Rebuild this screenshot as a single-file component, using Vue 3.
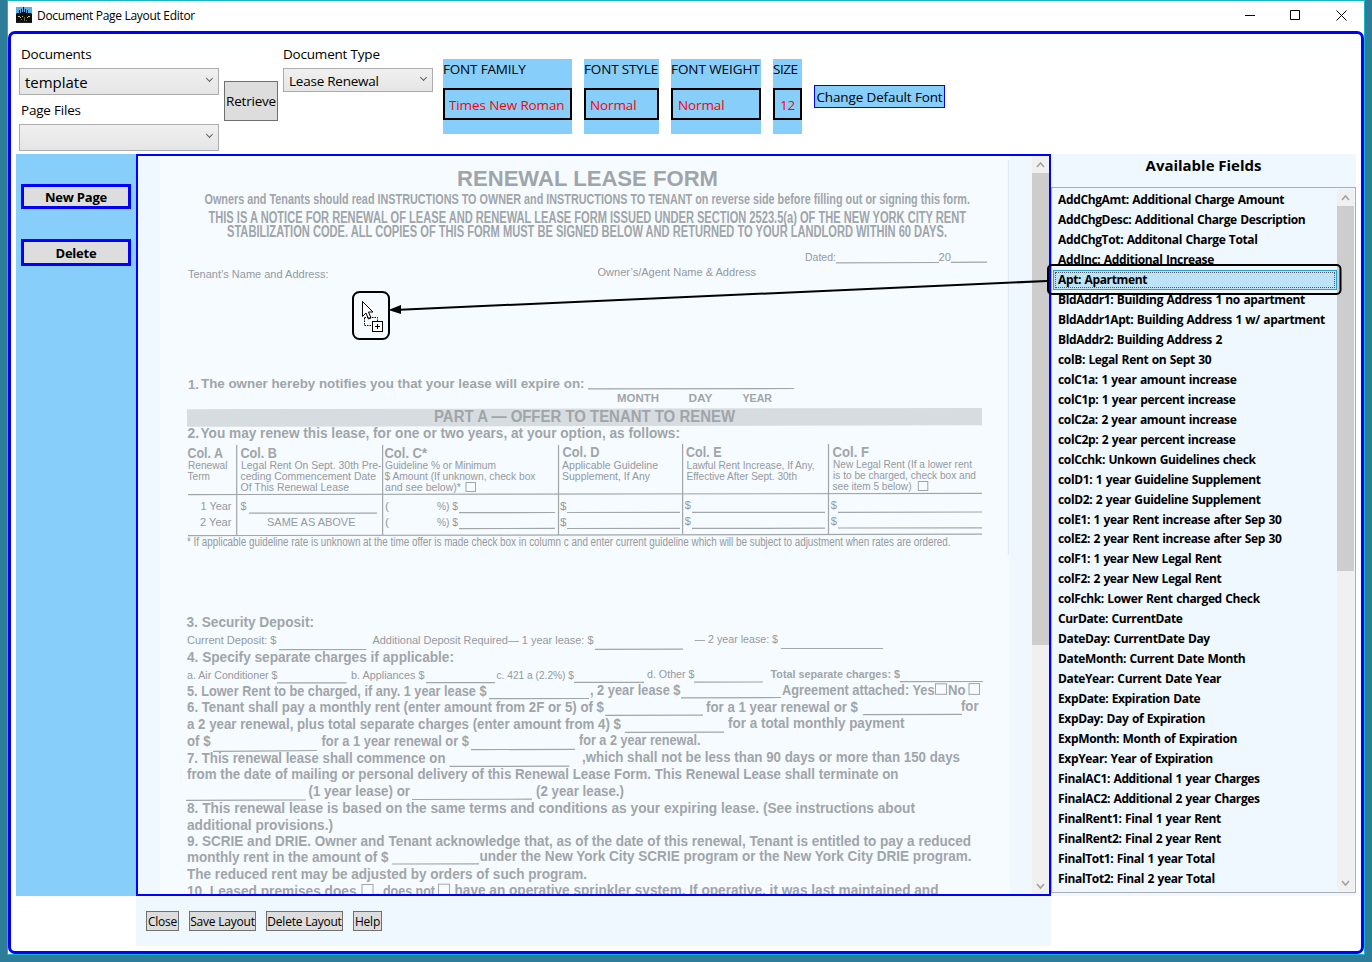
<script setup>
const fields = [
  'AddChgAmt: Additional Charge Amount',
  'AddChgDesc: Additional Charge Description',
  'AddChgTot: Additonal Charge Total',
  'AddInc: Additional Increase',
  'Apt: Apartment',
  'BldAddr1: Building Address 1 no apartment',
  'BldAddr1Apt: Building Address 1 w/ apartment',
  'BldAddr2: Building Address 2',
  'colB: Legal Rent on Sept 30',
  'colC1a: 1 year amount increase',
  'colC1p: 1 year percent increase',
  'colC2a: 2 year amount increase',
  'colC2p: 2 year percent increase',
  'colCchk: Unkown Guidelines check',
  'colD1: 1 year Guideline Supplement',
  'colD2: 2 year Guideline Supplement',
  'colE1: 1 year Rent increase after Sep 30',
  'colE2: 2 year Rent increase after Sep 30',
  'colF1: 1 year New Legal Rent',
  'colF2: 2 year New Legal Rent',
  'colFchk: Lower Rent charged Check',
  'CurDate: CurrentDate',
  'DateDay: CurrentDate Day',
  'DateMonth: Current Date Month',
  'DateYear: Current Date Year',
  'ExpDate: Expiration Date',
  'ExpDay: Day of Expiration',
  'ExpMonth: Month of Expiration',
  'ExpYear: Year of Expiration',
  'FinalAC1: Additional 1 year Charges',
  'FinalAC2: Additional 2 year Charges',
  'FinalRent1: Final 1 year Rent',
  'FinalRent2: Final 2 year Rent',
  'FinalTot1: Final 1 year Total',
  'FinalTot2: Final 2 year Total',
]
const selected = 4

const fontPanels = [
  { label: 'FONT FAMILY', value: 'Times New Roman', cls: 'family' },
  { label: 'FONT STYLE', value: 'Normal', cls: 'style' },
  { label: 'FONT WEIGHT', value: 'Normal', cls: 'weight' },
  { label: 'SIZE', value: '12', cls: 'size' },
]

// Printed text of the lease form: [left, baseline, right, font size, text]
const bold = [
  [457, 186.2, 718, 22, 'RENEWAL LEASE FORM'],
  [204.5, 203.6, 970, 14.4, 'Owners and Tenants should read INSTRUCTIONS TO OWNER and INSTRUCTIONS TO TENANT on reverse side before filling out or signing this form.'],
  [208.5, 223.1, 966, 16, 'THIS IS A NOTICE FOR RENEWAL OF LEASE AND RENEWAL LEASE FORM ISSUED UNDER SECTION 2523.5(a) OF THE NEW YORK CITY RENT'],
  [227, 236.9, 947, 16, 'STABILIZATION CODE. ALL COPIES OF THIS FORM MUST BE SIGNED BELOW AND RETURNED TO YOUR LANDLORD WITHIN 60 DAYS.'],
  [188, 388.6, 199, 13.7, '1.'],
  [201, 388.4, 584.5, 13.7, 'The owner hereby notifies you that your lease will expire on:'],
  [617, 402, 659, 11, 'MONTH'],
  [688.5, 402, 712.5, 11, 'DAY'],
  [742.5, 401.6, 772, 11, 'YEAR'],
  [434, 422, 735, 16, 'PART A — OFFER TO TENANT TO RENEW'],
  [187.5, 438.4, 199, 13.8, '2.'],
  [200.5, 438.2, 680, 13.8, 'You may renew this lease, for one or two years, at your option, as follows:'],
  [187.5, 457.7, 223, 13.8, 'Col. A'],
  [240.5, 457.7, 277, 13.8, 'Col. B'],
  [384.5, 457.5, 427, 13.8, 'Col. C*'],
  [562.5, 457.2, 599.5, 13.8, 'Col. D'],
  [686, 457, 721.5, 13.8, 'Col. E'],
  [832.5, 456.8, 869, 13.8, 'Col. F'],
  [186.5, 627.4, 314, 13.8, '3. Security Deposit:'],
  [187, 662.4, 454, 13.8, '4. Specify separate charges if applicable:'],
  [770.5, 678, 900, 11.6, 'Total separate charges: $'],
  [187, 696, 486.5, 13.8, '5. Lower Rent to be charged, if any. 1 year lease $'],
  [590, 695.3, 680.5, 13.8, ', 2 year lease $'],
  [782, 694.7, 934.5, 13.8, 'Agreement attached: Yes'],
  [948, 694.5, 965.5, 13.8, 'No'],
  [187, 712.4, 604, 13.8, '6. Tenant shall pay a monthly rent (enter amount from 2F or 5) of $'],
  [706, 711.6, 858, 13.8, 'for a 1 year renewal or $'],
  [961, 711.3, 978.5, 13.8, 'for'],
  [187, 729.3, 621, 13.8, 'a 2 year renewal, plus total separate charges (enter amount from 4) $'],
  [728, 728, 904.5, 13.8, 'for a total monthly payment'],
  [187, 746, 210.5, 13.8, 'of $'],
  [321.5, 745.6, 469, 13.8, 'for a 1 year renewal or $'],
  [579, 745, 700.5, 13.8, 'for a 2 year renewal.'],
  [187, 763, 445.5, 13.8, '7. This renewal lease shall commence on'],
  [582, 762, 960, 13.8, ',which shall not be less than 90 days or more than 150 days'],
  [187, 779.4, 898.5, 13.8, 'from the date of mailing or personal delivery of this Renewal Lease Form. This Renewal Lease shall terminate on'],
  [308.5, 796, 410, 13.8, '(1 year lease) or'],
  [536, 795.5, 624, 13.8, '(2 year lease.)'],
  [187, 812.6, 915, 13.8, '8. This renewal lease is based on the same terms and conditions as your expiring lease. (See instructions about'],
  [187, 830, 333, 13.8, 'additional provisions.)'],
  [187, 845.5, 971, 13.8, '9. SCRIE and DRIE. Owner and Tenant acknowledge that, as of the date of this renewal, Tenant is entitled to pay a reduced'],
  [187, 862.4, 388.5, 13.8, 'monthly rent in the amount of $'],
  [479.5, 861.4, 971.5, 13.8, 'under the New York City SCRIE program or the New York City DRIE program.'],
  [187, 879.2, 587, 13.8, 'The reduced rent may be adjusted by orders of such program.'],
  [187, 896, 356.5, 13.8, '10. Leased premises does'],
  [376, 895.6, 435, 13.8, ', does not'],
  [454.5, 895.2, 938.5, 13.8, 'have an operative sprinkler system. If operative, it was last maintained and'],
]
const regular = [
  [188, 277.6, 328.5, 11.6, 'Tenant’s Name and Address:'],
  [597.5, 276.3, 756, 11.6, 'Owner’s/Agent Name & Address'],
  [805, 261.2, 836, 11.6, 'Dated:'],
  [938.5, 260.8, 951, 11.6, '20'],
  [188, 469.4, 227.5, 11.2, 'Renewal'],
  [187.5, 480.2, 210, 11.2, 'Term'],
  [241, 469.4, 381.5, 11.2, 'Legal Rent On Sept. 30th Pre-'],
  [240.5, 480.2, 376, 11.2, 'ceding Commencement Date'],
  [240.5, 491.2, 349, 11.2, 'Of This Renewal Lease'],
  [385, 469.3, 496, 11.2, 'Guideline % or Minimum'],
  [384.5, 480, 535.5, 11.2, '$ Amount (If unknown, check box'],
  [385, 491, 461, 11.2, 'and see below)*'],
  [562, 468.8, 658, 11.2, 'Applicable Guideline'],
  [562, 479.8, 650, 11.2, 'Supplement, If Any'],
  [686.5, 468.5, 814.5, 11.2, 'Lawful Rent Increase, If Any,'],
  [686.5, 479.5, 797, 11.2, 'Effective After Sept. 30th'],
  [833, 468.2, 972, 11.2, 'New Legal Rent (If a lower rent'],
  [833, 479.2, 976, 11.2, 'is to be charged, check box and'],
  [832.5, 490.4, 911.5, 11.2, 'see item 5 below)'],
  [200.5, 510.3, 231.5, 11.4, '1 Year'],
  [200, 526.4, 231.5, 11.4, '2 Year'],
  [240.5, 510, 246.5, 11.4, '$'],
  [267, 526, 355.5, 11.4, 'SAME AS ABOVE'],
  [385, 510, 389, 11.4, '('],
  [385, 526.2, 389, 11.4, '('],
  [437, 509.8, 458, 11.4, '%) $'],
  [437, 526, 458, 11.4, '%) $'],
  [560, 509.6, 566.5, 11.4, '$'],
  [560, 525.6, 566.5, 11.4, '$'],
  [684.8, 509.2, 691, 11.4, '$'],
  [684.8, 525.4, 691, 11.4, '$'],
  [830.8, 509, 837, 11.4, '$'],
  [830.8, 525.2, 837, 11.4, '$'],
  [187, 545.8, 950.5, 12, '* If applicable guideline rate is unknown at the time offer is made check box in column c and enter current guideline which will be subject to adjustment when rates are ordered.'],
  [187, 644.4, 276.5, 11.6, 'Current Deposit: $'],
  [372.5, 644, 593.5, 11.6, 'Additional Deposit Required— 1 year lease: $'],
  [694.5, 643.4, 778, 11.6, '— 2 year lease: $'],
  [187, 679.4, 277.5, 11.6, 'a. Air Conditioner $'],
  [351, 679.2, 424.5, 11.6, 'b. Appliances $'],
  [496.5, 678.8, 574, 11.6, 'c. 421 a (2.2%) $'],
  [647, 678.4, 694.5, 11.6, 'd. Other $'],
]
// Fill-in rules and table rules: [x1, y1, x2, y2]
const rules = [
  [836, 262.8, 939, 262.5], [951, 262.4, 987, 262.2], [588, 388.8, 794, 388.5],
  [188, 494.6, 982, 493.4], [188, 535.6, 982, 534.2],
  [236.7, 445, 236.7, 535], [382.6, 445, 382.6, 535], [558.5, 445, 558.5, 535],
  [682.6, 444, 682.6, 534], [828.5, 444, 828.5, 534],
  [249, 513.2, 377, 513.2], [459, 512.7, 555, 512.5], [459, 528.6, 555, 528.4],
  [567, 512.5, 680, 512.4], [567, 528.5, 680, 528.4], [692, 512.4, 825, 512.3],
  [692, 528.4, 825, 528.2], [838, 512.3, 982, 512], [838, 528, 982, 527.8],
  [279, 649.6, 366, 649.5], [595, 649.3, 683, 649.2], [781, 648.5, 883, 648.5],
  [277, 682.8, 346.5, 682.8], [426, 682.6, 495, 682.6], [574, 682.3, 644, 682.3],
  [694, 682.2, 763, 682], [900, 681.7, 983, 681.5], [489, 698.6, 589, 698.5],
  [681, 697.8, 781, 697.5], [605, 715.4, 703, 715.2], [863, 714.6, 962, 714.4],
  [625, 732.4, 724, 732.2], [213, 751.4, 317, 750.5], [471, 749.6, 575, 749.4],
  [449.5, 766.4, 569.5, 766.2], [186, 800.4, 306, 800], [412, 799.5, 532, 799.2],
  [392, 864, 479, 863.8],
]
const boxes = [
  [466, 482.5, 9.5, 9], [918.3, 481.5, 9.5, 9], [935.5, 683.8, 11, 10.5],
  [969, 683.6, 10.5, 10.8], [362, 884.5, 11, 12], [438.5, 884.2, 11, 12],
]
</script>

<template>
  <div class="desktop">
    <div class="window">
      <header class="titlebar">
        <svg class="app-icon" width="16" height="16" viewBox="0 0 16 16">
          <rect width="16" height="16" fill="#5aaee6" />
          <path d="M0 15V7l1-1h2V3h1v3h1V2h1v3h1V0h1v5h1V2h1v4h1V3h1v3h3l1 1v8z" fill="#0b0d10" />
          <path d="M2 9h2v1H2zM4 10h1v1H4zM12 9h2v1h-2zM11 10h1v1h-1zM6 9h1v1H6z" fill="#d8d26a" />
          <path d="M8 10h1v4H8zM5 12h1v1H5zM10 13h1v1h-1z" fill="#6f6b33" />
          <rect y="15" width="16" height="1" fill="#182430" />
        </svg>
        <span class="title">Document Page Layout Editor</span>
        <svg class="controls" width="110" height="20" viewBox="0 0 110 20">
          <path d="M0 10.500h10M45.500 5.500h9v9h-9zM91.500 5.500l10 10M101.500 5.500l-10 10" fill="none" stroke="#000" />
        </svg>
      </header>

      <div class="frame">
        <section class="toolbar">
          <div class="docs">
            <label>Documents</label>
            <div class="combo big"><span>template</span><i class="chev"></i></div>
            <label>Page Files</label>
            <div class="combo big"><span></span><i class="chev"></i></div>
          </div>
          <button class="btn retrieve">Retrieve</button>
          <div class="type">
            <label>Document Type</label>
            <div class="combo"><span>Lease Renewal</span><i class="chev"></i></div>
          </div>
          <div class="fonts">
            <div v-for="p in fontPanels" :key="p.label" class="font-panel" :class="p.cls">
              <div class="font-label">{{ p.label }}</div>
              <div class="font-value">{{ p.value }}</div>
            </div>
          </div>
          <button class="change">Change Default Font</button>
        </section>

        <section class="main">
          <aside class="side">
            <button class="side-btn">New Page</button>
            <button class="side-btn second">Delete</button>
          </aside>

          <div class="center">
            <div class="canvas">
              <svg class="form" width="894" height="738" viewBox="138 156 894 738">
                <rect x="160" y="156" width="850" height="738" fill="#f6fbff" />
                <path d="M1008.500 160V555" stroke="#e4ebf0" stroke-width="1.500" />
                <path d="M187 409.200L982 408V425.200L187 426.800Z" fill="#d7dce0" />
                <g stroke="#a0a6aa" stroke-width="1.200">
                  <line v-for="(r, i) in rules" :key="i" :x1="r[0]" :y1="r[1]" :x2="r[2]" :y2="r[3]" />
                </g>
                <g fill="none" stroke="#a0a6aa">
                  <rect v-for="(b, i) in boxes" :key="i" :x="b[0]" :y="b[1]" :width="b[2]" :height="b[3]" />
                </g>
                <g class="print strong">
                  <text v-for="(t, i) in bold" :key="i" :x="t[0]" :y="t[1]" :font-size="t[3]" :textLength="t[2] - t[0]" lengthAdjust="spacingAndGlyphs">{{ t[4] }}</text>
                </g>
                <g class="print">
                  <text v-for="(t, i) in regular" :key="i" :x="t[0]" :y="t[1]" :font-size="t[3]" :textLength="t[2] - t[0]" lengthAdjust="spacingAndGlyphs">{{ t[4] }}</text>
                </g>
              </svg>
              <div class="scroll">
                <svg class="arrow" width="17" height="17"><path d="M5 11l3.500-4 3.500 4" /></svg>
                <div class="thumb page-thumb"></div>
                <svg class="arrow end" width="17" height="17"><path d="M5 7l3.500 4 3.500-4" /></svg>
              </div>
            </div>
            <footer class="actions">
              <button class="btn small close">Close</button>
              <button class="btn small save">Save Layout</button>
              <button class="btn small del">Delete Layout</button>
              <button class="btn small help">Help</button>
            </footer>
          </div>

          <aside class="fields">
            <h2>Available Fields</h2>
            <div class="listbox">
              <ul>
                <li v-for="(f, i) in fields" :key="f" :class="{ selected: i === selected }">{{ f }}</li>
              </ul>
              <div class="scroll">
                <svg class="arrow" width="17" height="17"><path d="M5 11l3.500-4 3.500 4" /></svg>
                <div class="thumb list-thumb"></div>
                <svg class="arrow end" width="17" height="17"><path d="M5 7l3.500 4 3.500-4" /></svg>
              </div>
            </div>
          </aside>
        </section>
      </div>
    </div>

    <svg class="drag" width="1372" height="962" viewBox="0 0 1372 962">
      <rect x="1048" y="265" width="292.500" height="29" rx="4" />
      <rect x="353" y="292" width="36" height="47" rx="6.500" />
      <path d="M1047 281L400 309.700" />
      <path class="solid" d="M388.500 310L401 305V314Z" />
      <path class="thin white" d="M362.500 301.500v15l3.500-3.500 2.500 6 2.500-1-2.500-6h4.500z" />
      <rect class="dash" x="364.500" y="317.500" width="13" height="8" />
      <rect class="thin white" x="372.500" y="321.500" width="10" height="10" />
      <path class="thin" d="M375 326.500h5M377.500 324v5" />
    </svg>
  </div>
</template>

<style>
html, body { margin: 0; overflow: hidden; }
</style>

<style scoped>
.desktop {
  position: relative; box-sizing: border-box; width: 1372px; height: 962px;
  padding-left: 7px; background: #2d7d9a; color: #000; overflow: hidden;
  font-family: "Open Sans", "Noto Sans", sans-serif; font-size: 13.500px;
}
.desktop * { box-sizing: border-box; }
.window { width: 1358px; height: 955px; background: #fff; border: 1px solid #18b5c4; }
.titlebar { display: flex; align-items: center; height: 30px; padding-left: 8px; }
.app-icon { display: block; margin-top: -2px; }
.title { margin: -2px 0 0 5px; font-size: 12px; letter-spacing: -0.310px; white-space: nowrap; }
.controls { margin-left: auto; margin-right: 9px; margin-top: -2px; }
.frame { height: 923px; border: 3px solid #00f; border-radius: 7px; padding-left: 5px; display: flex; flex-direction: column; }
button { font: inherit; color: #000; padding: 0; white-space: nowrap; }

.toolbar { display: flex; align-items: flex-start; height: 120px; padding-left: 3px; }
label { display: block; height: 29px; line-height: 31px; padding-left: 2px; letter-spacing: -0.200px; white-space: nowrap; }
.docs { width: 200px; padding-top: 5px; }
.combo {
  display: flex; align-items: center; justify-content: space-between; height: 24px;
  padding: 2px 6px 0 5px; border: 1px solid #acacac; letter-spacing: -0.230px;
  background: linear-gradient(#f0f0f0, #e5e5e5);
}
.combo.big { height: 27px; padding-top: 0; font-size: 15px; letter-spacing: -0.020px; }
.chev { width: 5px; height: 5px; margin-top: -7px; border: solid #606060; border-width: 0 1.300px 1.300px 0; transform: rotate(45deg); }
.btn { background: #ddd; border: 1px solid #707070; letter-spacing: -0.200px; }
.retrieve { width: 54px; height: 40px; margin: 47px 0 0 5px; }
.type { width: 150px; margin-left: 5px; padding-top: 5px; }
.type label { padding-left: 0; }
.fonts { display: flex; margin: 25px 0 0 10px; }
.font-panel { height: 75px; background: #87cefa; letter-spacing: -0.450px; white-space: nowrap; }
.family { width: 129px; letter-spacing: -0.180px; }
.style { width: 75px; margin-left: 12px; letter-spacing: -0.150px; }
.weight { width: 90px; margin-left: 12px; }
.size { width: 29px; margin-left: 12px; }
.font-label { height: 29px; line-height: 21px; }
.font-value { height: 32px; line-height: 31px; padding-left: 4px; border: 2px solid #000; color: #f00; letter-spacing: -0.120px; }
.weight .font-value, .size .font-value { padding-left: 5px; }
.weight .font-label { letter-spacing: -0.080px; }
.weight, .family { flex: none; }
.change { width: 131px; height: 23px; margin: 51px 0 0 12px; border: 1px solid #00f; background: #87cefa; letter-spacing: -0.130px; }

.main { display: flex; width: 1340px; height: 792px; }
.side { display: flex; flex-direction: column; width: 120px; height: 742px; padding: 30px 5px 0; background: #87cefa; }
.side-btn { height: 25px; padding-top: 1px; border: 3px solid #00f; background: #ddd; font-weight: 700; font-size: 13px; line-height: 19px; letter-spacing: -0.200px; }
.side-btn.second { height: 27px; margin-top: 30px; }
.center { width: 915px; background: #f0f8ff; }
.canvas { display: flex; height: 742px; border: 2px solid #00f; overflow: hidden; background: #eff7ff; }
.form { display: block; flex: none; }
.print { font-family: "Liberation Sans", Arial, sans-serif; fill: #94999e; }
.strong { font-weight: 700; fill: #a0a5a9; }
.scroll { display: flex; flex-direction: column; flex: none; width: 17px; background: #f0f0f0; }
.arrow { display: block; flex: none; fill: none; stroke: #a0a0a0; stroke-width: 1.500; }
.arrow.end { margin-top: auto; }
.thumb { background: #cdcdcd; flex: none; }
.page-thumb { height: 472px; }
.list-thumb { height: 365px; }
.actions { display: flex; gap: 10px; height: 50px; padding: 15px 0 0 10px; }
.small { height: 20px; padding-top: 1px; font-size: 12px; line-height: 17px; letter-spacing: -0.220px; }
.close { width: 33px; }
.save { width: 67px; }
.del { width: 77px; }
.help { width: 29px; }

.fields { width: 305px; height: 742px; background: #f0f8ff; }
h2 { margin: 0; height: 33px; line-height: 22px; font-size: 15px; letter-spacing: -0.020px; text-align: center; }
.listbox { display: flex; height: 706px; padding: 1px; border: 1px solid #abadb3; }
ul { flex: 1; margin: 0; padding: 1px 0 0; list-style: none; overflow: hidden; }
li { height: 19.970px; line-height: 20.400px; padding-left: 5px; font-size: 12px; font-weight: 700; letter-spacing: -0.360px; word-spacing: 0.700px; white-space: nowrap; }
li.selected { line-height: 18.400px; padding-left: 4px; border: 1px solid #26a0da; background: #bee3f6; outline: 1px dotted #555; outline-offset: -3px; }

.drag { position: absolute; left: 0; top: 0; fill: none; stroke: #000; stroke-width: 2; pointer-events: none; }
.solid { fill: #000; stroke: none; }
.thin { stroke-width: 1; }
.white { fill: #fff; }
.dash { stroke-width: 1; stroke-dasharray: 1.500 1; }
</style>
